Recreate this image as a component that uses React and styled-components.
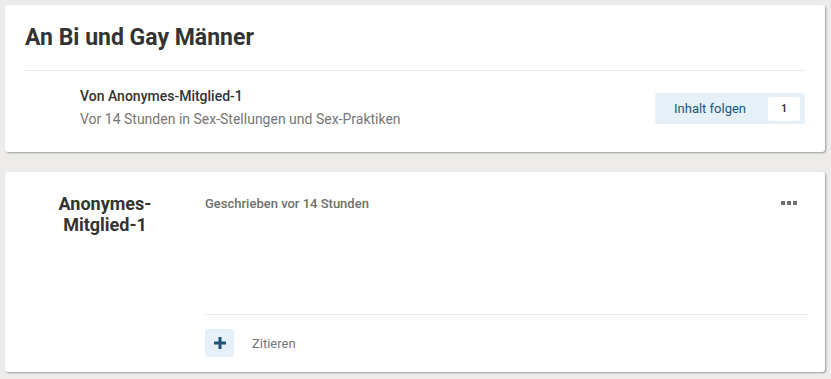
import React from 'react';
import styled, { createGlobalStyle } from 'styled-components';

const GlobalStyle = createGlobalStyle`
  html, body {
    margin: 0;
    padding: 0;
    background: #edecea;
    font-family: Roboto, "Liberation Sans", sans-serif;
    color: #333;
  }
`;

const Page = styled.div`
  padding: 5px 6px 5px 5px;
  display: flex;
  flex-direction: column;
  gap: 20px;
`;

const Card = styled.section`
  background: #fff;
  border-radius: 3px;
  box-shadow: 1px 1px 2px rgba(0, 0, 0, 0.35);
`;

const HeaderCard = styled(Card)`
  padding: 19px 20px 0 20px;
  height: 147px;
  box-sizing: border-box;
`;

const Title = styled.h1`
  margin: 0;
  font-size: 23px;
  line-height: 28px;
  font-weight: 700;
  color: #333;
  padding-bottom: 18px;
  border-bottom: 1px solid #ebebeb;
`;

const MetaRow = styled.div`
  display: flex;
  align-items: flex-start;
  justify-content: space-between;
  padding: 17px 0 0 55px;
`;

const MetaText = styled.div`
  display: flex;
  flex-direction: column;
  gap: 6px;
`;

const Author = styled.div`
  font-size: 14px;
  font-weight: 500;
  line-height: 17px;
  color: #333;
`;

const Subline = styled.div`
  font-size: 14px;
  line-height: 17px;
  color: #767676;
`;

const FollowButton = styled.button`
  display: flex;
  align-items: center;
  justify-content: space-between;
  width: 150px;
  height: 31px;
  padding: 0 5px 0 19px;
  box-sizing: border-box;
  border: 0;
  border-radius: 3px;
  background: #e6f0f8;
  color: #1f5478;
  font-family: inherit;
  font-size: 13px;
  margin-top: 5px;
`;

const Badge = styled.span`
  display: inline-flex;
  align-items: center;
  justify-content: center;
  width: 32px;
  height: 24px;
  border-radius: 3px;
  background: #fff;
  color: #333;
  font-size: 10px;
  font-weight: 700;
`;

const PostCard = styled(Card)`
  display: flex;
  height: 200px;
`;

const AuthorColumn = styled.div`
  width: 200px;
  flex: none;
  padding-top: 21px;
  text-align: center;
  font-size: 18px;
  font-weight: 700;
  line-height: 21px;
  color: #333;
`;

const PostBody = styled.div`
  flex: 1;
  display: flex;
  flex-direction: column;
  padding: 23px 16px 0 0;
`;

const PostHeader = styled.div`
  display: flex;
  justify-content: space-between;
  align-items: center;
  height: 16px;
`;

const PostDate = styled.span`
  font-size: 13px;
  font-weight: 500;
  color: #6f6f6f;
`;

const MoreDots = styled.span`
  display: flex;
  gap: 2px;
  margin-right: 12px;
  span {
    width: 4px;
    height: 4px;
    background: #6f6f6f;
  }
`;

const PostContent = styled.div`
  flex: 1;
  border-bottom: 1px solid #ebebeb;
  margin-bottom: 14px;
`;

const Footer = styled.div`
  display: flex;
  align-items: center;
  gap: 18px;
  height: 28px;
  margin-bottom: 15px;
`;

const IconButton = styled.button`
  width: 29px;
  height: 28px;
  border: 0;
  border-radius: 3px;
  background: #e6f0f8;
  display: flex;
  align-items: center;
  justify-content: center;
  padding: 0;
`;

const QuoteLabel = styled.span`
  font-size: 13px;
  color: #767676;
`;

export default function App() {
  return (
    <>
      <GlobalStyle />
      <Page>
        <HeaderCard>
          <Title>An Bi und Gay Männer</Title>
          <MetaRow>
            <MetaText>
              <Author>Von Anonymes-Mitglied-1</Author>
              <Subline>Vor 14 Stunden in Sex-Stellungen und Sex-Praktiken</Subline>
            </MetaText>
            <FollowButton>
              Inhalt folgen
              <Badge>1</Badge>
            </FollowButton>
          </MetaRow>
        </HeaderCard>
        <PostCard>
          <AuthorColumn>
            Anonymes-
            <br />
            Mitglied-1
          </AuthorColumn>
          <PostBody>
            <PostHeader>
              <PostDate>Geschrieben vor 14 Stunden</PostDate>
              <MoreDots>
                <span />
                <span />
                <span />
              </MoreDots>
            </PostHeader>
            <PostContent />
            <Footer>
              <IconButton aria-label="Zitat hinzufügen">
                <svg width="12" height="12" viewBox="0 0 12 12">
                  <path d="M4.5 0h3v4.5H12v3H7.5V12h-3V7.5H0v-3h4.5z" fill="#1f5478" />
                </svg>
              </IconButton>
              <QuoteLabel>Zitieren</QuoteLabel>
            </Footer>
          </PostBody>
        </PostCard>
      </Page>
    </>
  );
}
